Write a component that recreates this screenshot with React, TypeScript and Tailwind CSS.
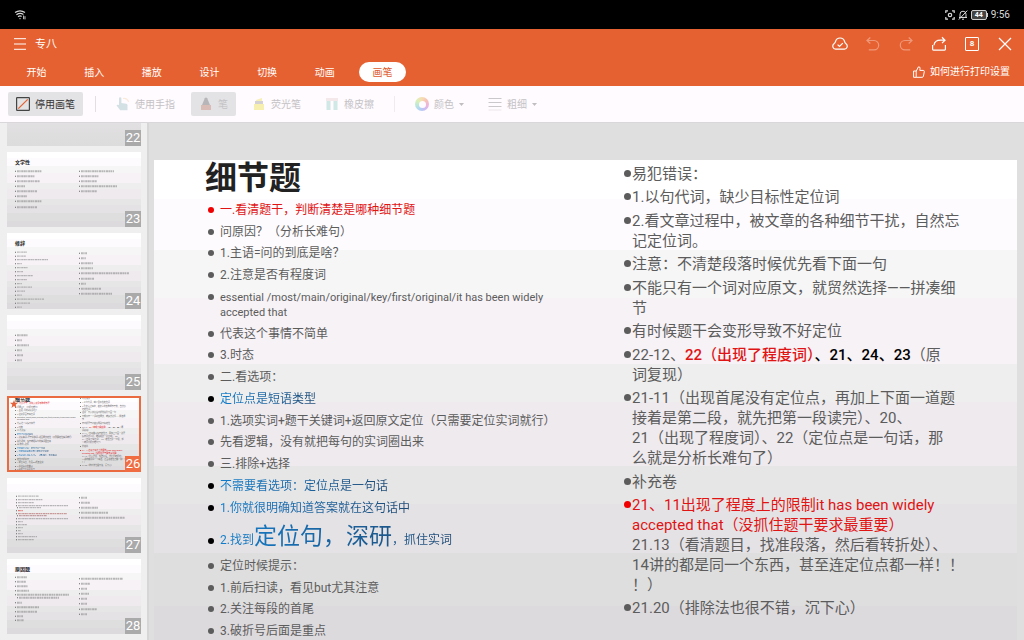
import React from "react";

type Run = { t: string; c?: "red" | "bold" | "big" | "latin" };
type Tone = "gray" | "red" | "blue";
type Item = { tone: Tone; lines: Run[][] };

const FONT = "font-[Roboto,'Noto_Sans_CJK_SC',sans-serif]";
const SLIDE_BG =
  "bg-[linear-gradient(to_bottom,#ffffff_8%,#fefbfe_8%,#fefbfe_18.5%,#f6f6f6_18.5%,#f6f6f6_28.5%,#f6f2f6_28.5%,#f6f2f6_42%,#eeeeee_42%,#eeeeee_50%,#eeeaee_50%,#eeeaee_63%,#e6e6e6_63%,#e6e6e6_71%,#e5e2e5_71%,#e5e2e5_81%,#dedede_81%,#dedede_92%,#dddade_92%)]";

const one = (t: string, tone: Tone = "gray"): Item => ({ tone, lines: [[{ t }]] });

const LEFT: Item[] = [
  one("一.看清题干，判断清楚是哪种细节题", "red"),
  one("问原因？（分析长难句）"),
  one("1.主语=问的到底是啥？"),
  one("2.注意是否有程度词"),
  {
    tone: "gray",
    lines: [
      [{ t: "essential /most/main/original/key/first/original/it has been widely", c: "latin" }],
      [{ t: "accepted that", c: "latin" }],
    ],
  },
  one("代表这个事情不简单"),
  one("3.时态"),
  one("二.看选项："),
  one("定位点是短语类型", "blue"),
  one("1.选项实词+题干关键词+返回原文定位（只需要定位实词就行）"),
  one("先看逻辑，没有就把每句的实词圈出来"),
  one("三.排除+选择"),
  one("不需要看选项：定位点是一句话", "blue"),
  one("1.你就很明确知道答案就在这句话中", "blue"),
  {
    tone: "blue",
    lines: [[{ t: "2.找到" }, { t: "定位句，深研", c: "big" }, { t: "，抓住实词" }]],
  },
  one("定位时候提示："),
  one("1.前后扫读，看见but尤其注意"),
  one("2.关注每段的首尾"),
  one("3.破折号后面是重点"),
];

const RIGHT: Item[] = [
  one("易犯错误："),
  one("1.以句代词，缺少目标性定位词"),
  {
    tone: "gray",
    lines: [[{ t: "2.看文章过程中，被文章的各种细节干扰，自然忘" }], [{ t: "记定位词。" }]],
  },
  one("注意：不清楚段落时候优先看下面一句"),
  {
    tone: "gray",
    lines: [[{ t: "不能只有一个词对应原文，就贸然选择——拼凑细" }], [{ t: "节" }]],
  },
  one("有时候题干会变形导致不好定位"),
  {
    tone: "gray",
    lines: [
      [
        { t: "22-12、" },
        { t: "22（出现了程度词）", c: "red" },
        { t: "、21、24、23", c: "bold" },
        { t: "（原" },
      ],
      [{ t: "词复现）" }],
    ],
  },
  {
    tone: "gray",
    lines: [
      [{ t: "21-11（出现首尾没有定位点，再加上下面一道题" }],
      [{ t: "接着是第二段，就先把第一段读完）、20、" }],
      [{ t: "21（出现了程度词）、22（定位点是一句话，那" }],
      [{ t: "么就是分析长难句了）" }],
    ],
  },
  one("补充卷"),
  {
    tone: "red",
    lines: [
      [{ t: "21、11出现了程度上的限制it has been widely" }],
      [{ t: "accepted that（没抓住题干要求最重要）" }],
    ],
  },
  {
    tone: "gray",
    lines: [
      [{ t: "21.13（看清题目，找准段落，然后看转折处）、" }],
      [{ t: "14讲的都是同一个东西，甚至连定位点都一样！！" }],
      [{ t: "！）" }],
    ],
  },
  one("21.20（排除法也很不错，沉下心）"),
];

const RIGHT_GROUPS: Item[][] = RIGHT.reduce<Item[][]>((groups, item) => {
  if (item.lines[0][0].t.startsWith("21.13")) groups[groups.length - 1].push(item);
  else groups.push([item]);
  return groups;
}, []);

const TEXT_TONE: Record<Tone, string> = {
  gray: "text-[#5c5c5c]",
  red: "text-[#e01414]",
  blue: "text-transparent bg-clip-text bg-linear-to-r from-[#0f7dcb] to-[#1d4a75]",
};
const DOT_TONE: Record<Tone, string> = {
  gray: "bg-[#5c5c5c]",
  red: "bg-[#f00000]",
  blue: "bg-black",
};

const RUN_STYLE = { red: "font-medium text-[#e01414]", bold: "font-medium text-black" };

function runClass(c: Run["c"], mini: boolean) {
  if (c === "red" || c === "bold") return RUN_STYLE[c];
  if (c === "big") return mini ? "text-[4px]" : "text-[23px] leading-[30px]";
  if (c === "latin" && !mini) return "text-[11px]";
  return "";
}

function Runs({ runs, mini }: { runs: Run[]; mini: boolean }) {
  return (
    <span className="block whitespace-nowrap">
      {runs.map((r, i) => (
        <span key={i} className={runClass(r.c, mini)}>
          {r.t}
        </span>
      ))}
    </span>
  );
}

function SlideContent({ mini = false }: { mini?: boolean }) {
  return (
    <div className={`grid h-full w-full grid-cols-[16fr_15fr] ${mini ? "pl-2" : "pl-[51px]"}`}>
      <div className={`flex min-w-0 flex-col ${mini ? "pb-px" : "pb-[6px]"}`}>
        <h2
          className={
            mini
              ? "text-[5px] leading-[6px] font-bold text-[#222]"
              : "text-[32px] leading-9 font-bold text-[#222]"
          }
        >
          细节题
        </h2>
        <ul
          className={`flex flex-1 flex-col justify-between ${
            mini ? "text-[2px] leading-[2px]" : "mt-[7px] text-xs leading-[15px]"
          }`}
        >
          {LEFT.map((item, i) => (
            <li key={i} className={`flex ${mini ? "gap-px" : "gap-[6px] pl-[3px]"}`}>
              <span
                className={`shrink-0 rounded-full ${DOT_TONE[item.tone]} ${
                  mini
                    ? "mt-px size-px"
                    : item.lines[0].length > 1
                      ? "mt-4 size-[6px]"
                      : "mt-1 size-[6px]"
                }`}
              />
              <span className={TEXT_TONE[item.tone]}>
                {item.lines.map((l, j) => (
                  <Runs key={j} runs={l} mini={mini} />
                ))}
              </span>
            </li>
          ))}
        </ul>
      </div>
      <ul
        className={`flex min-w-0 flex-col justify-between ${
          mini ? "pt-px pb-1 text-[2px] leading-[3px]" : "pt-1 pb-[27px] text-[15px] leading-5"
        }`}
      >
        {RIGHT_GROUPS.map((group, i) => (
          <li key={i} className="flex gap-px">
            <span
              className={`shrink-0 rounded-full ${DOT_TONE[group[0].tone]} ${
                mini ? "mt-px size-px" : "mt-[6px] size-[7px]"
              }`}
            />
            <div>
              {group.map((item, k) => (
                <div key={k} className={TEXT_TONE[item.tone]}>
                  {item.lines.map((l, j) => (
                    <Runs key={j} runs={l} mini={mini} />
                  ))}
                </div>
              ))}
            </div>
          </li>
        ))}
      </ul>
    </div>
  );
}

type Row = [x: number, y: number, w: number, color?: string];
type Thumb = { n: number; title?: string; rows: Row[] };

const THUMBS: Thumb[] = [
  {
    n: 23,
    title: "文学性",
    rows: [
      [8, 19, 25], [8, 24, 18], [8, 29, 23], [8, 34, 8], [8, 39, 20], [8, 44, 10], [8, 49, 25], [8, 55, 20],
      [72, 19, 33], [72, 24, 18], [72, 29, 16], [72, 34, 36], [72, 39, 16],
    ],
  },
  {
    n: 24,
    title: "修辞",
    rows: [
      [8, 19, 10], [8, 23, 9], [8, 26.5, 31], [8, 30.5, 5], [8, 34.5, 11], [8, 38.5, 6], [8, 42.5, 16],
      [8, 46.5, 10], [8, 50.5, 5], [8, 54, 15], [8, 58, 8], [8, 62, 5], [8, 66, 27], [8, 70, 13], [8, 74, 5],
      [72, 20, 6], [72, 25, 5], [72, 30, 12], [72, 35, 12], [72, 40, 48], [72, 45.5, 13], [72, 50.5, 5],
      [72, 55.5, 20], [72, 60.5, 31],
    ],
  },
  { n: 25, rows: [[8, 20, 11], [8, 25, 5], [8, 30, 12], [8, 35, 5], [8, 40, 6], [8, 45, 5]] },
  { n: 26, rows: [] },
  {
    n: 27,
    rows: [
      [9, 18, 21], [9, 21.5, 25], [9, 24.5, 16], [9, 27.5, 50], [10, 29.5, 22], [9, 32.5, 5, "#e03030"],
      [9, 35.5, 49, "#b06060"], [10, 37.5, 28, "#a06868"], [9, 40.5, 50], [9, 43.5, 5], [9, 46.5, 9],
      [9, 49.5, 5], [9, 52.5, 3], [9, 55.5, 5], [9, 58.5, 19], [9, 61.5, 16],
      [72, 19.5, 6], [72, 24.5, 9], [72, 29.5, 17], [72, 34.5, 27], [72, 39.5, 44],
    ],
  },
  {
    n: 28,
    title: "原因题",
    rows: [
      [8, 18, 10], [8, 22.5, 9], [8, 27, 11], [8, 31.5, 12], [8, 35.5, 52], [10, 38.5, 40], [8, 43.5, 5],
      [8, 48, 22], [8, 52.5, 20], [8, 57, 6], [8, 61, 7],
      [72, 19.5, 42], [72, 24.5, 9], [72, 29.5, 6], [72, 34.5, 8], [72, 39.5, 6], [72, 44.5, 6], [72, 50, 16], [72, 55, 6],
    ],
  },
];

function Miniature({ rows }: { rows: Row[] }) {
  return (
    <svg viewBox="0 0 134 75" className="absolute inset-0 size-full" aria-hidden="true">
      {rows.map(([x, y, w, color], i) => (
        <g key={i} stroke={color ?? "#8c8c8c"}>
          <path d={`M${x} ${y}h1`} strokeWidth="1.1" stroke="#666" />
          <path
            d={`M${x + 2} ${y}h${w}`}
            strokeWidth={x < 20 && rows.length > 20 ? 1.3 : 2}
            strokeDasharray="1.9 .4 1.3 .6 2.3 .4"
            opacity=".6"
          />
        </g>
      ))}
    </svg>
  );
}

function ThumbNumber({ n, active = false }: { n: number; active?: boolean }) {
  return (
    <span
      className={`absolute right-0 bottom-0 flex h-4 w-4 items-center justify-center text-[13px] leading-4 text-white ${
        active ? "bg-[#f06c42]" : "bg-[#aaaaab]"
      }`}
    >
      {n}
    </span>
  );
}

function Sidebar() {
  return (
    <nav
      aria-label="幻灯片"
      className="flex w-[149px] shrink-0 flex-col gap-[6px] overflow-hidden border-r-2 border-[#d6d6d6] bg-[#efefef] pr-[6px] pl-[7px]"
    >
      <button type="button" className="relative h-[23px] w-full shrink-0 bg-linear-to-b from-[#e2e0e2] to-[#dcdcdc]">
        <ThumbNumber n={22} />
      </button>
      {THUMBS.map((t) => (
        <button
          key={t.n}
          type="button"
          aria-current={t.n === 26}
          className={`relative flex aspect-video w-full shrink-0 items-start overflow-hidden text-left ${SLIDE_BG}`}
        >
          {t.title && (
            <span className="pt-[7px] pl-2 text-[5px] leading-[7px] font-bold text-[#222]">{t.title}</span>
          )}
          {t.n === 26 ? (
            <>
              <SlideContent mini />
              <span className="absolute inset-0 border-2 border-[#ea6b40]" />
              <svg viewBox="0 0 10 10" className="absolute top-1 left-[3px] size-2" aria-hidden="true">
                <path d="M5 0l1.3 3.5H10L7.1 5.8 8.2 10 5 7.5 1.8 10l1.1-4.2L0 3.5h3.7z" fill="#e5623a" />
              </svg>
            </>
          ) : (
            <Miniature rows={t.rows} />
          )}
          <ThumbNumber n={t.n} active={t.n === 26} />
        </button>
      ))}
    </nav>
  );
}

function Icon({ children, className = "size-4", box = 16 }: { children: React.ReactNode; className?: string; box?: number }) {
  return (
    <svg
      viewBox={`0 0 ${box} ${box}`}
      className={`shrink-0 ${className}`}
      fill="none"
      stroke="currentColor"
      strokeWidth="1.2"
      aria-hidden="true"
    >
      {children}
    </svg>
  );
}

function StatusBar() {
  return (
    <div className="flex h-[29px] shrink-0 items-center justify-between bg-black pr-[14px] pl-[14px] text-[#d8d8d8]">
      <Icon className="size-3" box={12}>
        <path d="M1 3.6Q6 .2 11 3.6M2.4 5.7Q6 3.2 9.4 5.4M4 7.7Q6 6.3 7.6 7.5" />
        <path d="M5 9.2h2L6 10.4z" fill="currentColor" stroke="none" />
        <path d="M9.6 6.5v3.7M11 10.4V7.2" strokeWidth=".9" />
      </Icon>
      <div className="flex items-center gap-[3px]">
        <Icon className="size-[10px]" box={10}>
          <path d="M.8 3V.8H3M7 .8h2.2V3M9.2 7v2.2H7M3 9.2H.8V7" />
          <circle cx="5" cy="5" r="1.7" />
        </Icon>
        <Icon className="size-[10px]" box={10}>
          <path d="M2 7.4V4.2a3 3 0 016 0v3.2zM1 7.5h8M4 9.2h2M9.3.6L.8 9.6" strokeWidth="1" />
        </Icon>
        <span className="flex items-center">
          <span className="flex h-[10px] w-4 items-center justify-center rounded-xs border border-[#d0d0d0] bg-[#444] text-[7px] leading-[8px] font-bold text-white">
            44
          </span>
          <span className="h-1 w-px bg-[#d0d0d0]" />
        </span>
        <span className="text-[10px] leading-3">9:56</span>
      </div>
    </div>
  );
}

const TABS = ["开始", "插入", "播放", "设计", "切换", "动画", "画笔"];

function Header() {
  return (
    <header className="shrink-0 bg-[#e66131] text-white">
      <div className="flex h-[29px] items-center justify-between pr-[11px] pl-[14px]">
        <div className="flex items-center gap-[9px]">
          <button type="button" aria-label="菜单">
            <Icon className="size-3" box={12}>
              <path d="M0 .7h12M0 6h12M0 11.3h12" strokeWidth="1" />
            </Icon>
          </button>
          <h1 className="pt-[2px] text-[11px] leading-4">专八</h1>
        </div>
        <div className="flex items-center gap-[17px]">
          <button type="button" aria-label="云同步">
            <Icon>
              <path d="M3.6 13.2A3 3 0 012 7.8Q3.2 7 3.5 5.5A4.7 4.7 0 0112.6 5.5Q12.8 7 14 7.8a3 3 0 01-1.6 5.4z" />
              <path d="M5.6 8.6l1.9 1.9 3.3-3.3" />
            </Icon>
          </button>
          <button type="button" aria-label="撤销" disabled className="opacity-35">
            <Icon>
              <path d="M5.3 1.5L2 4.5l3.3 3M2.2 4.5H9a4.7 4.7 0 010 9.4H3.8" />
            </Icon>
          </button>
          <button type="button" aria-label="重做" disabled className="opacity-35">
            <Icon>
              <path d="M10.7 1.5L14 4.5l-3.3 3M13.8 4.5H7a4.7 4.7 0 000 9.4h5.2" />
            </Icon>
          </button>
          <button type="button" aria-label="分享">
            <Icon>
              <path d="M11 1.3l3 2.9-3 2.9M13.8 4.2H9.5C5.5 4.2 3.4 6 3 9.2M1.6 9v4.3q0 .8.8.8h11.2q.8 0 .8-.8V9" />
            </Icon>
          </button>
          <button
            type="button"
            aria-label="窗口"
            className="mx-px flex size-[14px] items-center justify-center rounded-[1px] border border-white text-[8px] leading-[10px] font-bold"
          >
            8
          </button>
          <button type="button" aria-label="关闭">
            <Icon>
              <path d="M2 2l12 12M14 2L2 14" />
            </Icon>
          </button>
        </div>
      </div>
      <div className="flex h-7 items-center justify-between pr-[14px] pl-[13px]">
        <div role="tablist" className="flex w-[393px] justify-between text-[10px]">
          {TABS.map((t) => (
            <button
              key={t}
              type="button"
              role="tab"
              aria-selected={t === "画笔"}
              className={`h-5 w-[47px] rounded-full ${t === "画笔" ? "bg-white text-[#dd5a2c]" : ""}`}
            >
              {t}
            </button>
          ))}
        </div>
        <button type="button" className="flex items-center gap-[5px] text-[10px] leading-4">
          <Icon className="size-3" box={12}>
            <path
              d="M.6 5h2.6v6.3H.6zM3.2 5.2L5.4.9Q7.2.6 7.1 2.3L6.8 4.4h3.5q1.2.1 1 1.3l-.9 4.6q-.2 1-1.2 1h-6"
              strokeWidth="1"
            />
          </Icon>
          如何进行打印设置
        </button>
      </div>
    </header>
  );
}

function Tool({ icon, label, caret, on, disabled = true }: {
  icon: React.ReactNode;
  label: string;
  caret?: boolean;
  on?: boolean;
  disabled?: boolean;
}) {
  return (
    <button
      type="button"
      disabled={disabled}
      className={`flex h-6 items-center gap-[5px] rounded-xs px-2 text-[10px] ${
        disabled ? "text-[#c4c2c5]" : "text-[#333]"
      } ${on ? "bg-[#e3e2e4]" : ""}`}
    >
      {icon}
      {label}
      {caret && (
        <svg viewBox="0 0 5 3" className="h-[3px] w-[5px]" aria-hidden="true">
          <path d="M0 0h5L2.5 3z" fill="#c0bec1" />
        </svg>
      )}
    </button>
  );
}

function Toolbar() {
  return (
    <div className="flex h-9 shrink-0 items-center gap-2 bg-[#fffbff] pl-2">
      <Tool
        disabled={false}
        on
        label="停用画笔"
        icon={
          <Icon className="size-[14px]" box={14}>
            <rect x=".6" y=".6" width="12.8" height="12.8" rx=".6" stroke="#444" />
            <path d="M2.3 11.7l9.4-9.4" stroke="#e66131" />
          </Icon>
        }
      />
      <span className="mx-1 h-4 w-px bg-[#e2dfe2]" />
      <Tool
        label="使用手指"
        icon={
          <Icon className="size-[14px]" box={14}>
            <path d="M3 1.2q0-1 1.2-1t1.2 1V6l4.8.7q1.3.3 1.3 1.6v5H4.2L.6 8.5q.2-1.4 2.4-.4z" fill="#d3e1e5" stroke="none" />
            <path d="M7 1.5q4-.8 5.6 3.4" stroke="#fae9d8" strokeWidth="1.2" />
          </Icon>
        }
      />
      <Tool
        on
        label="笔"
        icon={
          <Icon className="size-[14px]" box={14}>
            <path d="M5.8 1.2q1.2-1.6 2.4 0L11 8H3z" fill="#b8b5b8" stroke="none" />
            <path d="M2 8h10v5H2z" fill="#d9bcb5" stroke="none" />
          </Icon>
        }
      />
      <Tool
        label="荧光笔"
        icon={
          <Icon className="size-[14px]" box={14}>
            <path d="M4 3l6-2v4H4z" fill="#f6efb6" stroke="none" />
            <path d="M3 4h8v3H3z" fill="#d3d1d4" stroke="none" />
            <path d="M2 7h10v6H2z" fill="#f7efb0" stroke="none" />
          </Icon>
        }
      />
      <Tool
        label="橡皮擦"
        icon={
          <Icon className="size-[14px]" box={14}>
            <path d="M1 1h12v3H1z" fill="#f4e8ea" stroke="none" />
            <path d="M1.5 4h4v9h-4zM8.5 4h4v9h-4z" fill="#d0e8e6" stroke="none" />
          </Icon>
        }
      />
      <span className="mx-1 h-4 w-px bg-[#efecef]" />
      <Tool
        caret
        label="颜色"
        icon={
          <span className="flex size-[14px] items-center justify-center rounded-full bg-[conic-gradient(#f8dcb0,#f6c2b8,#eeb4dc,#c8bcf4,#b0d4f4,#bce8d8,#dcf0b8,#f8dcb0)]">
            <span className="size-[7px] rounded-full bg-[#fffbff]" />
          </span>
        }
      />
      <Tool
        caret
        label="粗细"
        icon={
          <Icon className="size-[14px]" box={14}>
            <path d="M.5 1.5h13M.5 5.5h13M.5 9.5h13" stroke="#cbc8cb" strokeWidth="1.2" />
            <path d="M.5 13h13" stroke="#eae6ea" strokeWidth="1" />
          </Icon>
        }
      />
    </div>
  );
}

export default function App() {
  return (
    <div className={`flex h-screen flex-col overflow-hidden ${FONT}`}>
      <StatusBar />
      <Header />
      <Toolbar />
      <div className="flex min-h-0 flex-1 border-t border-[#d9d7d9] bg-[#dfdfdf]">
        <Sidebar />
        <main className="min-w-0 flex-1 overflow-hidden pt-[37px] pr-[7px] pl-[5px]">
          <section className={`aspect-video w-full ${SLIDE_BG}`}>
            <SlideContent />
          </section>
        </main>
      </div>
    </div>
  );
}
